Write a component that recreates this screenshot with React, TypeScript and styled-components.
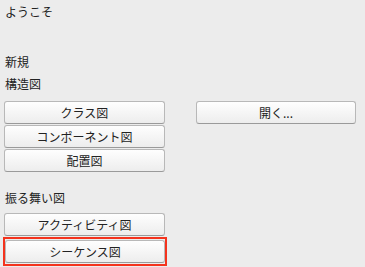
import React from "react";
import styled, { createGlobalStyle } from "styled-components";

const GlobalStyle = createGlobalStyle`
  html, body {
    margin: 0;
    padding: 0;
    background: #ececec;
  }
  body {
    font-family: "Noto Sans CJK JP", "Noto Sans", sans-serif;
    font-size: 12px;
    color: #222;
  }
`;

const Page = styled.div`
  width: 365px;
  height: 267px;
  padding: 0 4px;
  box-sizing: border-box;
  overflow: hidden;
`;

const Label = styled.div<{ $top?: number }>`
  line-height: 22px;
  height: 22px;
  margin-top: ${({ $top }) => $top ?? 0}px;
  padding-left: 1px;
`;

const Welcome = styled(Label)`
  line-height: 24px;
  height: 24px;
`;

const Grid = styled.div<{ $top: number }>`
  display: grid;
  grid-template-columns: 161px 160px;
  column-gap: 31px;
  margin-top: ${({ $top }) => $top}px;
`;

const Stack = styled.div`
  display: flex;
  flex-direction: column;
  gap: 1px;
`;

const Button = styled.button`
  display: block;
  height: 23px;
  width: 100%;
  padding: 0;
  font-family: inherit;
  font-size: 12px;
  color: #222;
  background: linear-gradient(#fefefe, #ededed);
  border: 1px solid #b8b8b8;
  border-bottom-color: #9a9a9a;
  border-radius: 3px;
  cursor: default;
`;

// red selection frame around the focused button
const Highlight = styled.div`
  margin: 0 -2px 0 -1px;
  padding: 1px 0;
  border: 2px solid #f4331d;
`;

export default function App() {
  return (
    <>
      <GlobalStyle />
      <Page>
        <Welcome>ようこそ</Welcome>
        <Label $top={27}>新規</Label>
        <Label>構造図</Label>
        <Grid $top={6}>
          <Stack>
            <Button>クラス図</Button>
            <Button>コンポーネント図</Button>
            <Button>配置図</Button>
          </Stack>
          <Stack>
            <Button>開く...</Button>
          </Stack>
        </Grid>
        <Label $top={15}>振る舞い図</Label>
        <Grid $top={4}>
          <Stack>
            <Button>アクティビティ図</Button>
            <Highlight>
              <Button>シーケンス図</Button>
            </Highlight>
          </Stack>
        </Grid>
      </Page>
    </>
  );
}
